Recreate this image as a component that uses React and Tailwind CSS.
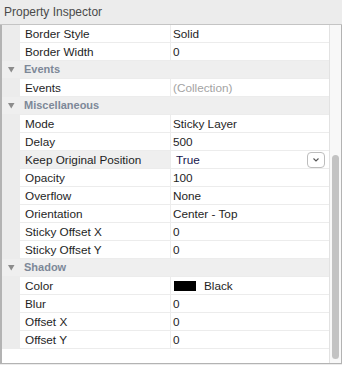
const sections = [
  {
    rows: [
      { label: 'Border Style', value: 'Solid' },
      { label: 'Border Width', value: '0' },
    ],
  },
  {
    title: 'Events',
    rows: [{ label: 'Events', value: '(Collection)', muted: true }],
  },
  {
    title: 'Miscellaneous',
    rows: [
      { label: 'Mode', value: 'Sticky Layer' },
      { label: 'Delay', value: '500' },
      { label: 'Keep Original Position', value: 'True', select: true },
      { label: 'Opacity', value: '100' },
      { label: 'Overflow', value: 'None' },
      { label: 'Orientation', value: 'Center - Top' },
      { label: 'Sticky Offset X', value: '0' },
      { label: 'Sticky Offset Y', value: '0' },
    ],
  },
  {
    title: 'Shadow',
    rows: [
      { label: 'Color', value: 'Black', swatch: '#000000' },
      { label: 'Blur', value: '0' },
      { label: 'Offset X', value: '0' },
      { label: 'Offset Y', value: '0' },
    ],
  },
];

function Category({ title }) {
  return (
    <div className="flex h-[17px] items-center bg-[#efefef]">
      <svg width="18" height="17" viewBox="0 0 18 17" className="shrink-0">
        <path d="M6 6 L12.5 6 L9.25 11.5 Z" fill="#8c8c8c" />
      </svg>
      <span className="pl-[4px] text-[11px] font-bold text-[#7d8898]">{title}</span>
    </div>
  );
}

function Row({ row }) {
  return (
    <div className="flex h-[17px]">
      <div className="w-[18px] shrink-0" />
      <div
        className={`flex w-[150px] shrink-0 items-center pl-[5px] text-[#1e1e1e] ${
          row.select ? 'bg-[#efefef]' : 'bg-white'
        }`}
      >
        {row.label}
      </div>
      <div className="w-px shrink-0" />
      {row.select ? (
        <div className="flex flex-1 items-center justify-between bg-white pl-[5px] pr-[4px]">
          <span className="text-[#14144c]">{row.value}</span>
          <div className="flex h-[16px] w-[18px] items-center justify-center rounded-[4px] border border-[#bdbdbd] bg-white">
            <svg width="8" height="6" viewBox="0 0 8 6">
              <path d="M1.5 1.5 L4 4 L6.5 1.5" fill="none" stroke="#555" strokeWidth="1.1" />
            </svg>
          </div>
        </div>
      ) : (
        <div
          className={`flex flex-1 items-center bg-white pl-[2px] ${
            row.muted ? 'text-[#a3a3a3]' : 'text-[#1e1e1e]'
          }`}
        >
          {row.swatch && (
            <span className="mr-[8px] ml-[1px] h-[10px] w-[22px]" style={{ background: row.swatch }} />
          )}
          {row.value}
        </div>
      )}
    </div>
  );
}

export default function App() {
  return (
    <div
      className="h-[365px] w-[342px] overflow-hidden bg-[#ececec] text-[11.75px]"
      style={{ fontFamily: '"Liberation Sans", Arial, sans-serif' }}
    >
      <div className="flex h-[25px] items-center border-b border-[#c4c4c4] pl-[4px] text-[12px] text-[#4a4a4a]">
        Property Inspector
      </div>

      <div className="flex h-[339px] border-b border-l-2 border-r border-[#b3b3b3] bg-white">
        <div className="flex w-[327px] flex-col">
          <div className="flex flex-col gap-px bg-[#ececec] pb-px">
            {sections.map((s, i) => (
              <div key={i} className="flex flex-col gap-px">
                {s.title && <Category title={s.title} />}
                {s.rows.map((r) => (
                  <Row key={r.label} row={r} />
                ))}
              </div>
            ))}
          </div>
        </div>

        <div className="flex w-[12px] flex-col border-l border-[#e2e2e2] bg-[#f8f8f8] pl-[2px] pr-[2px]">
          <div className="h-[130px] shrink-0" />
          <div className="mb-[4px] flex-1 rounded-full bg-[#c3c3c3]" />
        </div>
      </div>
    </div>
  );
}
